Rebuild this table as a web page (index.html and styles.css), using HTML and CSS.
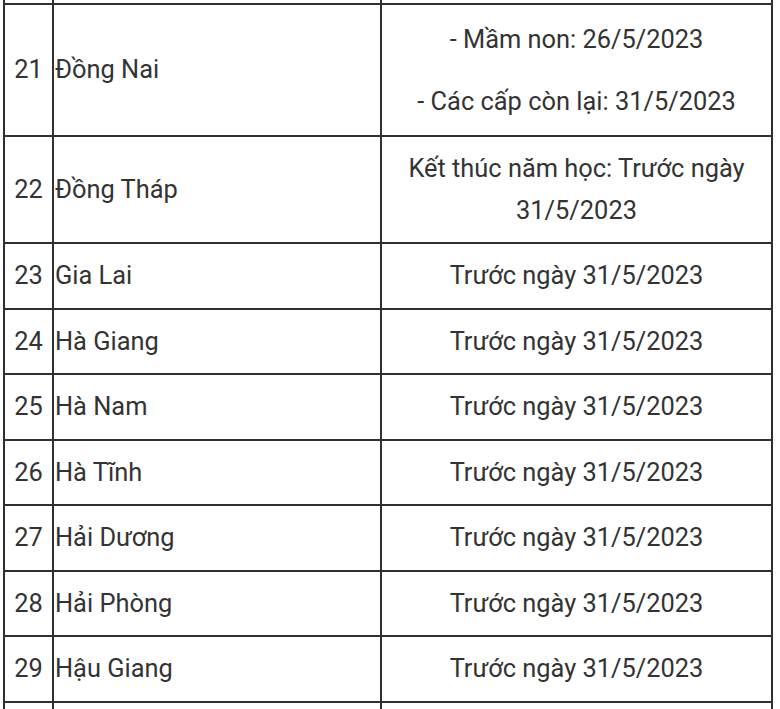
FILE: index.html
```html
<!DOCTYPE html>
<html lang="vi">
<head>
<meta charset="utf-8">
<title>Lịch kết thúc năm học</title>
<link rel="stylesheet" href="styles.css">
</head>
<body>
<table class="schedule">
  <colgroup>
    <col class="c-num">
    <col class="c-name">
    <col class="c-date">
  </colgroup>
  <tbody>
    <tr class="cut"><td></td><td></td><td></td></tr>
    <tr>
      <td class="num">21</td>
      <td class="name">Đồng Nai</td>
      <td class="date"><p>- Mầm non: 26/5/2023</p><p>- Các cấp còn lại: 31/5/2023</p></td>
    </tr>
    <tr>
      <td class="num">22</td>
      <td class="name">Đồng Tháp</td>
      <td class="date">Kết thúc năm học: Trước ngày 31/5/2023</td>
    </tr>
    <tr><td class="num">23</td><td class="name">Gia Lai</td><td class="date">Trước ngày 31/5/2023</td></tr>
    <tr><td class="num">24</td><td class="name">Hà Giang</td><td class="date">Trước ngày 31/5/2023</td></tr>
    <tr><td class="num">25</td><td class="name">Hà Nam</td><td class="date">Trước ngày 31/5/2023</td></tr>
    <tr><td class="num">26</td><td class="name">Hà Tĩnh</td><td class="date">Trước ngày 31/5/2023</td></tr>
    <tr><td class="num">27</td><td class="name">Hải Dương</td><td class="date">Trước ngày 31/5/2023</td></tr>
    <tr><td class="num">28</td><td class="name">Hải Phòng</td><td class="date">Trước ngày 31/5/2023</td></tr>
    <tr><td class="num">29</td><td class="name">Hậu Giang</td><td class="date">Trước ngày 31/5/2023</td></tr>
    <tr class="tail"><td></td><td></td><td></td></tr>
  </tbody>
</table>
</body>
</html>
```

FILE: styles.css
```css
html, body {
  margin: 0;
  padding: 0;
  background: #ffffff;
}

body {
  font-family: Roboto, "Noto Sans", sans-serif;
  font-size: 25.4px;
  color: #333333;
  overflow: hidden;
  height: 709px;
}

.schedule {
  border-collapse: collapse;
  table-layout: fixed;
  width: 768px;
  margin-left: 3px;
}

.c-num { width: 49px; }
.c-name { width: 328px; }
.c-date { width: 391px; }

.schedule td {
  border: 2px solid #2e3032;
  padding: 11px 1px;
  line-height: 41.5px;
  vertical-align: middle;
}

.schedule .cut td {
  border-top: 0;
  height: 3px;
  padding: 0;
  line-height: 0;
}

.schedule .tail td {
  border-bottom: 0;
  height: 40px;
}

.num {
  text-align: center;
}

.name {
  text-align: left;
}

.date {
  text-align: center;
}

.date p {
  margin: 20px 0;
}

.date p:first-child { margin-top: 3px; }
.date p:last-child { margin-bottom: 2px; }
```
